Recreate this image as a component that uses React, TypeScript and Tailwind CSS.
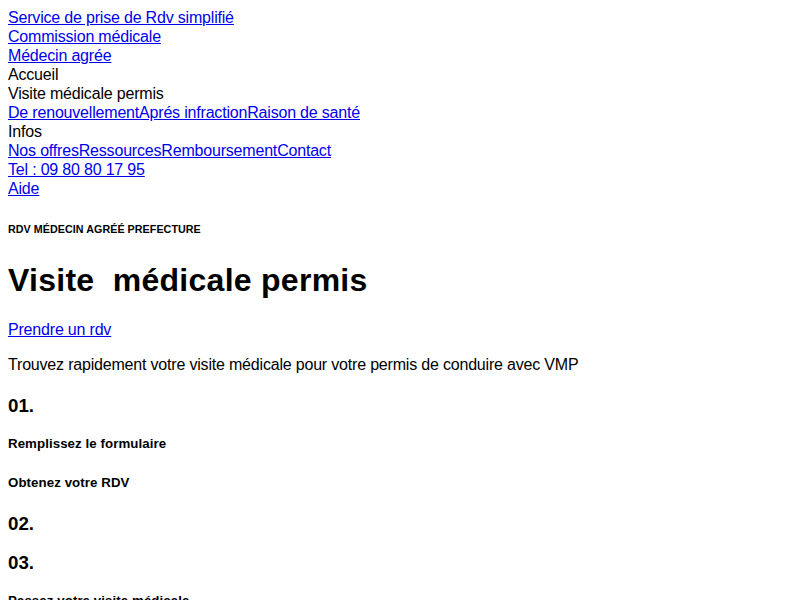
import React from 'react';

const linkCls = 'text-[#0000ee] underline';

const App: React.FC = () => {
  return (
    <div className="bg-white min-h-screen">
      <div className="m-2 text-black text-[16px] leading-[19px] tracking-[-0.19px] font-['Liberation_Sans',Arial,sans-serif]">
        <header>
          <div><a href="#" className={linkCls}>Service de prise de Rdv simplifié</a></div>
          <div><a href="#" className={linkCls}>Commission médicale</a></div>
          <div><a href="#" className={linkCls}>Médecin agrée</a></div>
          <div>Accueil</div>
          <div>Visite médicale permis</div>
          <div>
            <a href="#" className={linkCls}>De renouvellement</a>
            <a href="#" className={linkCls}>Aprés infraction</a>
            <a href="#" className={linkCls}>Raison de santé</a>
          </div>
          <div>Infos</div>
          <div>
            <a href="#" className={linkCls}>Nos offres</a>
            <a href="#" className={linkCls}>Ressources</a>
            <a href="#" className={linkCls}>Remboursement</a>
            <a href="#" className={linkCls}>Contact</a>
          </div>
          <div><a href="#" className={linkCls}>Tel : 09 80 80 17 95</a></div>
          <div><a href="#" className={linkCls}>Aide</a></div>
        </header>

        <main>
          <h6 className="text-[10.72px] leading-[1.2] tracking-[0.05px] font-bold my-[25px]">RDV MÉDECIN AGRÉÉ PREFECTURE</h6>
          <h1 className="text-[32px] leading-[1.2] tracking-[0.27px] font-bold mt-[21.44px] mb-[20.5px]">Visite&nbsp; médicale permis</h1>
          <p className="my-4"><a href="#" className={linkCls}>Prendre un rdv</a></p>
          <p className="mt-4 mb-[22px]">Trouvez rapidement votre visite médicale pour votre permis de conduire avec VMP</p>

          <h3 className="text-[18.72px] leading-[20px] tracking-normal font-bold mt-[22px] mb-[20px]">01.</h3>
          <h5 className="text-[13.28px] leading-[16px] tracking-[0.08px] font-bold mt-[20px] mb-[23px]">Remplissez le formulaire</h5>
          <h5 className="text-[13.28px] leading-[16px] tracking-[0.08px] font-bold mt-[23px] mb-[23px]">Obtenez votre RDV</h5>
          <h3 className="text-[18.72px] leading-[20px] tracking-normal font-bold mt-[23px] mb-[19px]">02.</h3>
          <h3 className="text-[18.72px] leading-[20px] tracking-normal font-bold mt-[19px] mb-[20px]">03.</h3>
          <h5 className="text-[13.28px] leading-[16px] tracking-[0.08px] font-bold mt-[20px] mb-[22px]">Passez votre visite médicale</h5>
        </main>
      </div>
    </div>
  );
};

export default App;
